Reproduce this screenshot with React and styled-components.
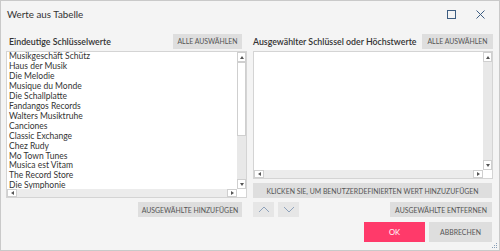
import React from "react"
import styled, { createGlobalStyle } from "styled-components"

const GlobalStyle = createGlobalStyle`
  html, body {
    margin: 0;
    padding: 0;
    background: #f4f4f4;
  }
  body {
    font-family: Lato, "Liberation Sans", sans-serif;
  }
`

const Dialog = styled.div`
  width: 500px;
  height: 251px;
  box-sizing: border-box;
  border: 1px solid #c9c9c9;
  background: #f4f4f4;
  display: flex;
  flex-direction: column;
  position: relative;
  overflow: hidden;
`

const TitleBar = styled.div`
  height: 26px;
  display: flex;
  align-items: center;
  padding: 0 8px 0 6px;
  flex: none;
`

const Title = styled.div`
  flex: 1;
  font-size: 9.8px;
  color: #333;
`

const WindowButton = styled.div`
  width: 22px;
  height: 14px;
  display: grid;
  place-content: center;
  margin-left: 7px;
`

const Body = styled.div`
  display: grid;
  grid-template-columns: 241px 240px;
  column-gap: 6px;
  padding: 6px 0 0 5px;
`

const Column = styled.div`
  display: flex;
  flex-direction: column;
  gap: ${p => p.$gap || 4}px;
  min-width: 0;
`

const Header = styled.div`
  height: 16px;
  display: flex;
  align-items: center;
  justify-content: space-between;
  padding-left: ${p => p.$indent || 0}px;
  padding-right: ${p => p.$right || 0}px;
  margin-bottom: -1px;
`

const Heading = styled.div`
  font-size: 8.8px;
  font-weight: 600;
  color: #333;
  white-space: nowrap;
`

const Button = styled.div`
  flex: none;
  height: ${p => p.$h || 15}px;
  background: #dedede;
  color: #555;
  font-size: 6.9px;
  display: flex;
  align-items: center;
  justify-content: center;
  white-space: nowrap;
  box-sizing: border-box;
  width: ${p => (p.$w ? p.$w + "px" : "auto")};
`

const PrimaryButton = styled(Button)`
  background: #ff3a6a;
  color: #fff;
  font-size: 7.6px;
`

const ListBox = styled.div`
  height: ${p => p.$h}px;
  box-sizing: border-box;
  border: 1px solid #d4d4d4;
  background: #fff;
  display: grid;
  grid-template-columns: 1fr 9px;
  grid-template-rows: 1fr 8px;
`

const Items = styled.div`
  overflow: hidden;
  padding: 0 0 0 2px;
`

const Item = styled.div`
  font-size: 8.5px;
  line-height: 9.95px;
  color: #333;
  white-space: nowrap;
`

const VScroll = styled.div`
  display: flex;
  flex-direction: column;
  background: #e8e8e8;
`

const HScroll = styled.div`
  display: flex;
  background: #ececec;
`

const ArrowBox = styled.div`
  flex: none;
  width: ${p => (p.$horizontal ? 10 : 9)}px;
  height: ${p => (p.$horizontal ? 8 : 10)}px;
  box-sizing: border-box;
  border: 1px solid #cfcfcf;
  background: #fff;
  display: grid;
  place-content: center;
`

const Thumb = styled.div`
  height: ${p => p.$h}px;
  box-sizing: border-box;
  border: 1px solid #cfcfcf;
  background: #fff;
  flex: none;
`

const Track = styled.div`
  flex: 1;
`

const Corner = styled.div`
  background: #fff;
`

const Row = styled.div`
  display: flex;
  align-items: center;
  gap: ${p => p.$gap || 4}px;
  justify-content: ${p => p.$justify || "flex-end"};
  padding-right: ${p => p.$right || 0}px;
`

const NavButton = styled.div`
  width: 21px;
  height: 15px;
  background: #e6e6e6;
  display: grid;
  place-content: center;
`

const Footer = styled.div`
  display: flex;
  justify-content: flex-end;
  gap: 4px;
  padding: 5px 7px 0 0;
`

const Grip = styled.svg`
  position: absolute;
  right: 1px;
  bottom: 1px;
`

const Tri = ({ dir }) => {
  const pts = {
    up: "0,3 2,0 4,3",
    down: "0,0 4,0 2,3",
    left: "3,0 3,4 0,2",
    right: "0,0 0,4 3,2",
  }
  const horizontal = dir === "left" || dir === "right"
  return (
    <svg width={horizontal ? 3 : 4} height={horizontal ? 4 : 3}>
      <polygon points={pts[dir]} fill="#555" />
    </svg>
  )
}

function Scrollable({ height, thumb, children }) {
  return (
    <ListBox $h={height}>
      <Items>{children}</Items>
      <VScroll>
        <ArrowBox><Tri dir="up" /></ArrowBox>
        {thumb && <Thumb $h={thumb} />}
        <Track />
        <ArrowBox><Tri dir="down" /></ArrowBox>
      </VScroll>
      <HScroll>
        <ArrowBox $horizontal><Tri dir="left" /></ArrowBox>
        <Track />
        <ArrowBox $horizontal><Tri dir="right" /></ArrowBox>
      </HScroll>
      <Corner />
    </ListBox>
  )
}

const Chevron = ({ up }) => (
  <svg width="12" height="7" viewBox="0 0 12 7">
    <polyline
      points={up ? "1,6 6,1 11,6" : "1,1 6,6 11,1"}
      fill="none"
      stroke="#8ea2bb"
      strokeWidth="1"
    />
  </svg>
)

const values = [
  "Musikgeschäft Schütz",
  "Haus der Musik",
  "Die Melodie",
  "Musique du Monde",
  "Die Schallplatte",
  "Fandangos Records",
  "Walters Musiktruhe",
  "Canciones",
  "Classic Exchange",
  "Chez Rudy",
  "Mo Town Tunes",
  "Musica est Vitam",
  "The Record Store",
  "Die Symphonie",
]

export default function App() {
  return (
    <>
      <GlobalStyle />
      <Dialog>
        <TitleBar>
          <Title>Werte aus Tabelle</Title>
          <WindowButton>
            <svg width="9" height="9">
              <rect x="0.5" y="0.5" width="8" height="8" fill="none" stroke="#3d5d82" />
            </svg>
          </WindowButton>
          <WindowButton>
            <svg width="9" height="9">
              <path d="M0.5 0.5 L8.5 8.5 M8.5 0.5 L0.5 8.5" stroke="#3d5d82" strokeWidth="1" />
            </svg>
          </WindowButton>
        </TitleBar>
        <Body>
          <Column $gap={3}>
            <Header $indent={3} $right={5}>
              <Heading>Eindeutige Schlüsselwerte</Heading>
              <Button $w={69}>ALLE AUSWÄHLEN</Button>
            </Header>
            <Scrollable height={147} thumb={74}>
              {values.map(v => (
                <Item key={v}>{v}</Item>
              ))}
            </Scrollable>
            <Row $right={5} style={{ marginTop: 1 }}>
              <Button $w={104}>AUSGEWÄHLTE HINZUFÜGEN</Button>
            </Row>
          </Column>
          <Column $gap={3}>
            <Header>
              <Heading>Ausgewählter Schlüssel oder Höchstwerte</Heading>
              <Button $w={71}>ALLE AUSWÄHLEN</Button>
            </Header>
            <Scrollable height={128} />
            <Button style={{ marginTop: 1 }} $w={239}>
              KLICKEN SIE, UM BENUTZERDEFINIERTEN WERT HINZUZUFÜGEN
            </Button>
            <Row $justify="space-between" style={{ marginTop: 1 }}>
              <Row>
                <NavButton><Chevron up /></NavButton>
                <NavButton><Chevron /></NavButton>
              </Row>
              <Button $w={102} style={{ marginRight: 1 }}>AUSGEWÄHLTE ENTFERNEN</Button>
            </Row>
          </Column>
        </Body>
        <Footer>
          <PrimaryButton $h={20} $w={61}>OK</PrimaryButton>
          <Button $h={20} $w={63}>ABBRECHEN</Button>
        </Footer>
        <Grip width="7" height="7">
          <rect x="5" y="1" width="1" height="1" fill="#8aa0b8" />
          <rect x="3" y="3" width="1" height="1" fill="#8aa0b8" />
          <rect x="5" y="3" width="1" height="1" fill="#8aa0b8" />
          <rect x="1" y="5" width="1" height="1" fill="#8aa0b8" />
          <rect x="3" y="5" width="1" height="1" fill="#8aa0b8" />
          <rect x="5" y="5" width="1" height="1" fill="#8aa0b8" />
        </Grip>
      </Dialog>
    </>
  )
}
